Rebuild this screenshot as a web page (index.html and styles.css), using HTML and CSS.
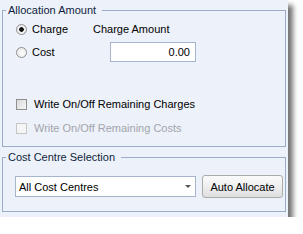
FILE: index.html
```html
<!DOCTYPE html>
<html lang="en">
<head>
  <meta charset="UTF-8" />
  <title>Allocation</title>
  <link rel="stylesheet" href="styles.css">
</head>
<body>

  <div class="window">
    <fieldset class="group">
      <legend>Allocation Amount</legend>
      <div class="group-body amount-body">
        <div class="row">
          <label class="option"><span class="radio checked"></span>Charge</label>
          <span class="field-label">Charge Amount</span>
        </div>
        <div class="row row-cost">
          <label class="option"><span class="radio"></span>Cost</label>
          <input class="amount" type="text" value="0.00" />
        </div>
        <label class="check first"><span class="box"></span>Write On/Off Remaining Charges</label>
        <label class="check disabled"><span class="box"></span>Write On/Off Remaining Costs</label>
      </div>
    </fieldset>

    <fieldset class="group group-centre">
      <legend>Cost Centre Selection</legend>
      <div class="group-body centre-body">
        <div class="row row-centre">
          <div class="select">All Cost Centres<span class="arrow"></span></div>
          <button class="btn">Auto Allocate</button>
        </div>
      </div>
    </fieldset>
  </div>

</body>
</html>
```

FILE: styles.css
```css
* {
  box-sizing: border-box;
}

body {
  margin: 0;
  background: #fff;
  font-family: "Liberation Sans", Arial, sans-serif;
  font-size: 11px;
  color: #000;
}

.window {
  width: 288px;
  height: 217px;
  padding-top: 3px;
  background: #edf1f9;
  box-shadow: 5px 5px 5px rgba(0, 0, 0, 0.55);
}

.group {
  margin: 0 2px;
  padding: 0;
  min-width: 0;
  border: 1px solid #9cadca;
}

.group-centre {
  margin-top: 3px;
}

legend {
  margin-left: 3px;
  padding: 0 6px 0 2px;
  line-height: 14px;
  color: #0f1f3d;
}

.amount-body {
  padding: 5px 0 11px 13px;
}

.centre-body {
  padding: 11px 0 13px 12px;
}

.row {
  display: flex;
  align-items: center;
  height: 14px;
}

.row-cost {
  margin-top: 6px;
  height: 20px;
}

.row-centre {
  height: 23px;
}

.option {
  display: flex;
  align-items: center;
  width: 77px;
}

.radio {
  width: 11px;
  height: 11px;
  margin-right: 5px;
  border: 1px solid #8e8f8f;
  border-radius: 50%;
  background: radial-gradient(circle at 60% 60%, #fdfdfd 0, #e4e4e4 100%);
}

.radio.checked {
  background: radial-gradient(circle, #111 0, #111 2px, #f6f6f6 2.6px, #dcdcdc 100%);
}

.amount {
  width: 86px;
  height: 20px;
  margin: 0 0 0 17px;
  padding: 0 5px 0 0;
  border: 1px solid #a7b5cc;
  background: #fff;
  font: inherit;
  text-align: right;
  color: #000;
}

.check {
  display: flex;
  align-items: center;
  height: 14px;
  margin-top: 10px;
}

.check.first {
  margin-top: 35px;
}

.box {
  width: 11px;
  height: 11px;
  margin-right: 7px;
  border: 1px solid #909090;
  background: linear-gradient(135deg, #d9d9d9, #f7f7f7);
}

.check.disabled {
  color: #a1a5ac;
}

.check.disabled .box {
  border-color: #c6c6c6;
  background: #f5f5f5;
}

.select {
  display: flex;
  align-items: center;
  justify-content: space-between;
  width: 181px;
  height: 21px;
  padding: 0 4px 0 3px;
  border: 1px solid #a7b5cc;
  background: #fff;
}

.arrow {
  width: 0;
  height: 0;
  border-top: 3px solid #555;
  border-left: 3px solid transparent;
  border-right: 3px solid transparent;
}

.btn {
  width: 81px;
  height: 23px;
  margin-left: 6px;
  padding: 0;
  border: 1px solid #acacac;
  border-radius: 3px;
  background: linear-gradient(#fbfbfb 0%, #efefef 50%, #dedede 100%);
  font: inherit;
  color: #000;
}
```
